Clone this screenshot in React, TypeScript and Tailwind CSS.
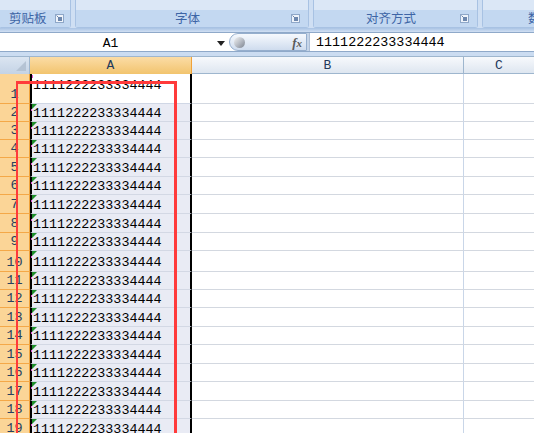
import * as React from "react";

const VALUE = "1111222233334444";

// heights of rows 1..19 as they show on screen
const rowHeights = [30, 18, 18, 18, 19, 18, 19, 19, 18, 21, 18, 18, 19, 18, 19, 18, 19, 18, 19];

const cjk = "font-['Microsoft_YaHei','Noto_Sans_CJK_SC',sans-serif]";
const mono = "font-['Liberation_Mono','Noto_Sans_CJK_SC',monospace]";

function Launcher() {
  return (
    <svg width="9" height="9" viewBox="0 0 9 9" className="shrink-0">
      <rect x="0.5" y="0.5" width="8" height="8" fill="#eef3fa" stroke="#8ea7c8" />
      <rect x="3" y="3" width="4" height="4" fill="#6d87ad" />
      <path d="M1.5 1.5 L5 5" stroke="#6d87ad" />
    </svg>
  );
}

function RibbonGroup({ label, width }: { label: string; width: string }) {
  return (
    <div className={`${width} shrink-0 h-full rounded-b-[3px] border-x border-b border-[#a8c2e3] bg-[#dbe7f6] flex flex-col`}>
      <div className="h-[10px]" />
      <div className="flex-1 bg-[#c3d8f1] flex items-center px-2">
        <span className={`${cjk} text-[12.5px] text-[#3d65a6] leading-none flex-1 text-center`}>{label}</span>
        <Launcher />
      </div>
    </div>
  );
}

function Ribbon() {
  return (
    <div className="h-[28px] flex gap-[4px] bg-[#cfdff3] -ml-[1px]">
      <div className="w-[72px] shrink-0 h-full rounded-b-[3px] border-x border-b border-[#a8c2e3] bg-[#dbe7f6] flex flex-col">
        <div className="h-[10px]" />
        <div className="flex-1 bg-[#c3d8f1] flex items-center pl-[9px] pr-[6px]">
          <span className={`${cjk} text-[12.5px] text-[#3d65a6] leading-none flex-1`}>剪贴板</span>
          <Launcher />
        </div>
      </div>
      <RibbonGroup label="字体" width="w-[234px]" />
      <RibbonGroup label="对齐方式" width="w-[165px]" />
      <div className="flex-1 h-full rounded-b-[3px] border-l border-b border-[#a8c2e3] bg-[#dbe7f6] flex flex-col">
        <div className="h-[10px]" />
        <div className="flex-1 bg-[#c3d8f1] flex items-center pl-[45px]">
          <span className={`${cjk} text-[12.5px] text-[#3d65a6] leading-none`}>数</span>
        </div>
      </div>
    </div>
  );
}

function FormulaBar() {
  return (
    <div className="h-[20px] flex bg-white border-y border-[#8fa9c9]">
      <div className="w-[229px] shrink-0 flex items-center pt-[2px]">
        <span className={`${mono} text-[13px] text-black flex-1 text-center pl-[4px] leading-none`}>A1</span>
        <svg width="8" height="5" viewBox="0 0 8 5" className="mr-[4px]">
          <path d="M0 0 H8 L4 5 Z" fill="#222" />
        </svg>
      </div>
      <div className="w-[78px] shrink-0 h-[18px] rounded-l-full border border-[#95aecd] bg-gradient-to-b from-[#f6f9fd] via-[#e3ebf6] to-[#cfdcee] flex items-center px-[4px]">
        <div className="w-[11px] h-[11px] rounded-full bg-gradient-to-br from-[#f4f4f4] via-[#b9bec6] to-[#7c838f]" />
        <div className="flex-1" />
        <span className="font-['Liberation_Serif',serif] italic font-bold text-[13px] text-[#5a5a5a] leading-none">
          f<span className="text-[11px]">x</span>
        </span>
      </div>
      <div className="w-[2px] shrink-0 bg-[#c6d5e8]" />
      <div className="flex-1 flex items-center pl-[6px] pt-[2px] border-l border-[#aebfd6]">
        <span className={`${mono} text-[13.4px] text-black leading-none`}>{VALUE}</span>
      </div>
    </div>
  );
}

function HeaderRow() {
  return (
    <div className="h-[18px] flex border-t border-[#9eb6ce]">
      <div className="w-[30px] shrink-0 bg-gradient-to-b from-[#dbe5f1] to-[#c4d3e6] border-r border-[#9eb6ce] relative">
        <svg width="10" height="10" viewBox="0 0 10 10" className="absolute right-[3px] bottom-[3px]">
          <path d="M10 0 V10 H0 Z" fill="#b5c3d4" />
        </svg>
      </div>
      <div className="w-[162px] shrink-0 bg-gradient-to-b from-[#fbdca5] to-[#f2c46d] border-r border-[#f0a23a] flex items-center justify-center">
        <span className={`${mono} text-[13px] text-[#23395b] leading-none`}>A</span>
      </div>
      <div className="w-[272px] shrink-0 bg-gradient-to-b from-[#f7f9fc] to-[#dee6f0] border-r border-[#9eb6ce] border-b border-b-[#9eb6ce] flex items-center justify-center">
        <span className={`${mono} text-[13px] text-[#23395b] leading-none`}>B</span>
      </div>
      <div className="flex-1 bg-gradient-to-b from-[#f7f9fc] to-[#dee6f0] border-b border-[#9eb6ce] flex items-center justify-center">
        <span className={`${mono} text-[13px] text-[#23395b] leading-none`}>C</span>
      </div>
    </div>
  );
}

function Row({ n, h }: { n: number; h: number }) {
  const active = n === 1;
  return (
    <div className="flex" style={{ height: h }}>
      <div className="w-[30px] shrink-0 bg-[#fbd597] border-r border-[#f0a23a] border-b border-b-[#f4a848] flex items-end justify-center">
        <span className={`${mono} text-[13.5px] text-[#27415f] leading-[16px]`}>{n}</span>
      </div>
      <div
        className={`w-[162px] shrink-0 relative border-l-2 border-r-2 border-l-black border-r-black border-b ${
          active ? "bg-white border-b-[#d0d7e5] items-start pt-[5px]" : "bg-[#e9ebf4] border-b-[#d3d8e4] items-center pt-[3px]"
        } flex pl-[1px]`}
      >
        <span className={`${mono} text-[13.4px] text-black leading-[14px]`}>{VALUE}</span>
        {active ? (
          <div className="absolute left-0 top-[1px] w-[1px] h-[3px] bg-[#e24fd0]" />
        ) : (
          <>
            <svg width="5" height="5" viewBox="0 0 5 5" className="absolute left-0 top-0">
              <path d="M0 0 H5 L0 5 Z" fill="#1f8f2c" />
            </svg>
            <div className="absolute -left-[1px] top-[5px] w-[1px] h-[2px] bg-[#e24fd0]" />
          </>
        )}
      </div>
      <div className="w-[272px] shrink-0 bg-white border-r border-[#c9d6e8] border-b border-b-[#d3d8e0]" />
      <div className="flex-1 bg-white border-b border-[#d3d8e0]" />
    </div>
  );
}

export default function App() {
  return (
    <div className="w-[534px] h-[433px] overflow-hidden bg-[#c9daf0] relative">
      <Ribbon />
      <div className="h-[4px] bg-gradient-to-b from-[#a9c3e4] to-[#d1e0f3]" />
      <FormulaBar />
      <div className="h-[4px] bg-[#cbdcf1]" />
      <HeaderRow />
      <div className="flex flex-col">
        {rowHeights.map((h, i) => (
          <Row key={i} n={i + 1} h={h} />
        ))}
      </div>
      {/* red highlight rectangle drawn over the sheet */}
      <div className="absolute left-[16px] top-[81px] w-[161px] h-[380px] border-[3px] border-[#ff3b3b] border-l-2 pointer-events-none" />
    </div>
  );
}
